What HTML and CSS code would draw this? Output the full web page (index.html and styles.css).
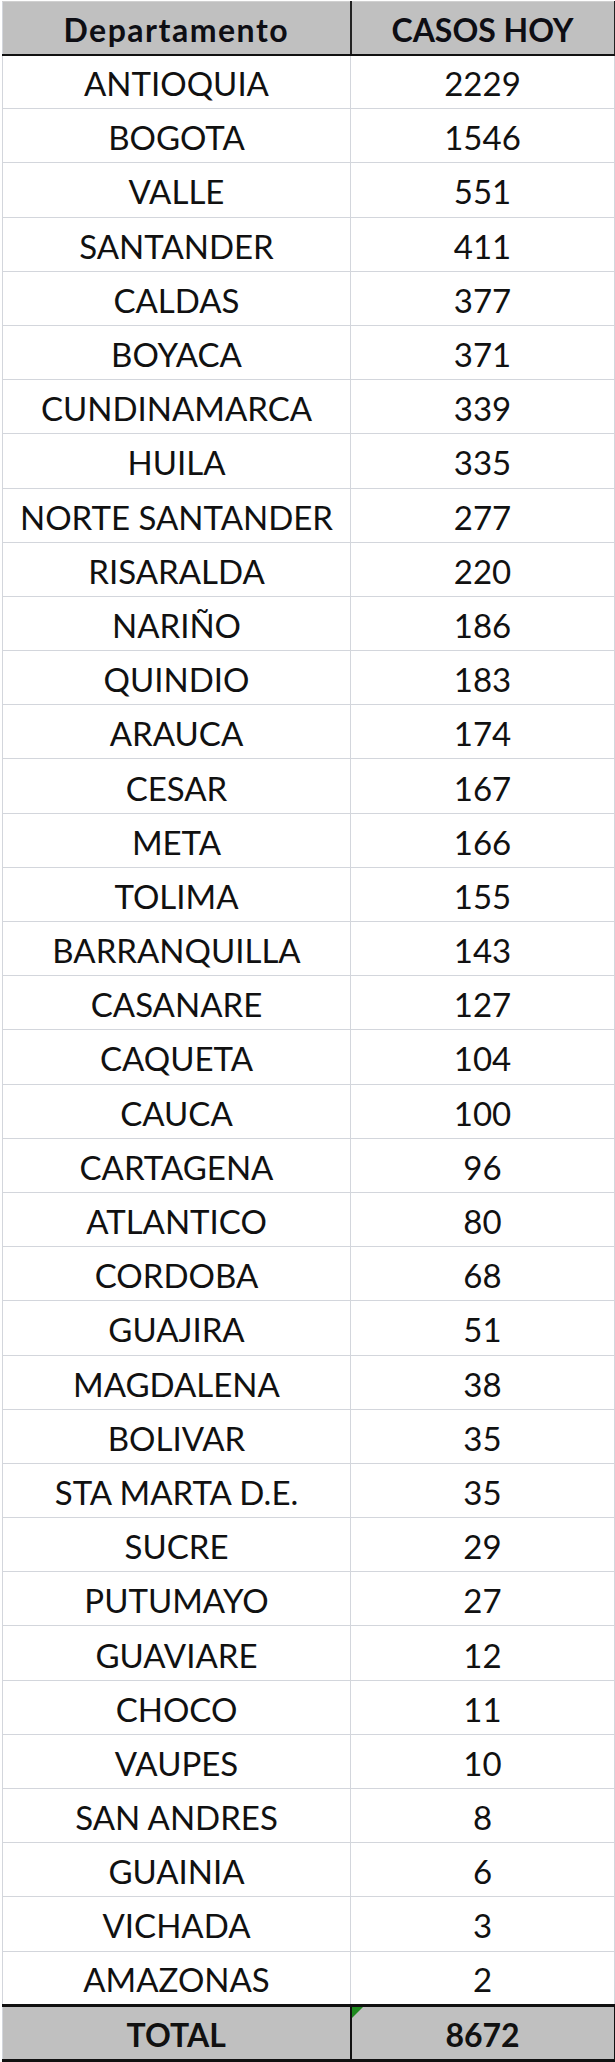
FILE: index.html
```html
<!DOCTYPE html>
<html lang="es">
<head>
<meta charset="utf-8">
<title>Casos hoy por departamento</title>
<link rel="stylesheet" href="styles.css">
</head>
<body>
<table class="sheet">
  <colgroup><col class="c-dep"><col class="c-num"></colgroup>
  <thead>
    <tr class="head"><th class="h-dep">Departamento</th><th>CASOS HOY</th></tr>
  </thead>
  <tbody>
    <tr><td>ANTIOQUIA</td><td>2229</td></tr>
    <tr><td>BOGOTA</td><td>1546</td></tr>
    <tr><td>VALLE</td><td>551</td></tr>
    <tr><td>SANTANDER</td><td>411</td></tr>
    <tr><td>CALDAS</td><td>377</td></tr>
    <tr><td>BOYACA</td><td>371</td></tr>
    <tr><td>CUNDINAMARCA</td><td>339</td></tr>
    <tr><td>HUILA</td><td>335</td></tr>
    <tr><td>NORTE SANTANDER</td><td>277</td></tr>
    <tr><td>RISARALDA</td><td>220</td></tr>
    <tr><td>NARIÑO</td><td>186</td></tr>
    <tr><td>QUINDIO</td><td>183</td></tr>
    <tr><td>ARAUCA</td><td>174</td></tr>
    <tr><td>CESAR</td><td>167</td></tr>
    <tr><td>META</td><td>166</td></tr>
    <tr><td>TOLIMA</td><td>155</td></tr>
    <tr><td>BARRANQUILLA</td><td>143</td></tr>
    <tr><td>CASANARE</td><td>127</td></tr>
    <tr><td>CAQUETA</td><td>104</td></tr>
    <tr><td>CAUCA</td><td>100</td></tr>
    <tr><td>CARTAGENA</td><td>96</td></tr>
    <tr><td>ATLANTICO</td><td>80</td></tr>
    <tr><td>CORDOBA</td><td>68</td></tr>
    <tr><td>GUAJIRA</td><td>51</td></tr>
    <tr><td>MAGDALENA</td><td>38</td></tr>
    <tr><td>BOLIVAR</td><td>35</td></tr>
    <tr><td>STA MARTA D.E.</td><td>35</td></tr>
    <tr><td>SUCRE</td><td>29</td></tr>
    <tr><td>PUTUMAYO</td><td>27</td></tr>
    <tr><td>GUAVIARE</td><td>12</td></tr>
    <tr><td>CHOCO</td><td>11</td></tr>
    <tr><td>VAUPES</td><td>10</td></tr>
    <tr><td>SAN ANDRES</td><td>8</td></tr>
    <tr><td>GUAINIA</td><td>6</td></tr>
    <tr><td>VICHADA</td><td>3</td></tr>
    <tr><td>AMAZONAS</td><td>2</td></tr>
  </tbody>
  <tfoot>
    <tr class="total"><td>TOTAL</td><td class="flagged">8672</td></tr>
  </tfoot>
</table>
</body>
</html>
```
FILE: styles.css
```css
html, body {
  margin: 0;
  padding: 0;
  background: #ffffff;
}

body {
  padding: 1px 0 0 2px;
  font-family: Lato, "Open Sans", "Liberation Sans", sans-serif;
  color: #111111;
}

.sheet {
  border-collapse: collapse;
  table-layout: fixed;
  width: 612px;
}

.c-dep { width: 348px; }
.c-num { width: 264px; }

.sheet th,
.sheet td {
  padding: 4px 0 0 0;
  box-sizing: border-box;
  text-align: center;
  vertical-align: middle;
  font-size: 33px;
  line-height: 1;
  border: 1px solid #d3d6dc;
}

.head th {
  height: 53px;
  background: #c0c0c0;
  font-weight: 700;
  font-size: 32px;
  color: #0e0e14;
  border-top: 1px solid #d0d0d0;
  border-bottom: 2px solid #111111;
  border-right: 2px solid #222222;
}

.head .h-dep {
  letter-spacing: 1.5px;
}

.sheet tbody td {
  height: 54.2px;
  font-weight: 400;
}

.total td {
  height: 55px;
  background: #c0c0c0;
  font-weight: 700;
  font-size: 32px;
  border-top: 3px solid #111111;
  border-bottom: 3px solid #111111;
  border-right: 2px solid #111111;
}

.total td:first-child {
  border-left: 1px solid #d3d6dc;
}

.flagged {
  position: relative;
}

.flagged::before {
  content: "";
  position: absolute;
  left: 0;
  top: 0;
  width: 0;
  height: 0;
  border-top: 11px solid #1e8a1e;
  border-right: 11px solid transparent;
}
```
